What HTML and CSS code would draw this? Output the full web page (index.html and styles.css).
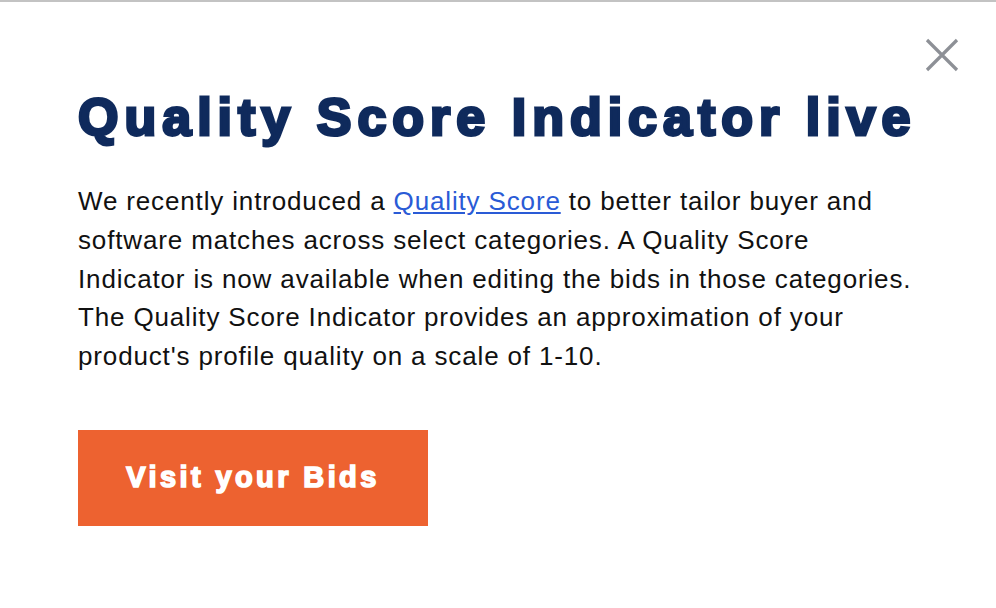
FILE: index.html
```html
<!DOCTYPE html>
<html lang="en">
<head>
<meta charset="utf-8">
<title>Quality Score Indicator live</title>
<link rel="stylesheet" href="styles.css">
</head>
<body>
<div class="modal">
  <button class="close" aria-label="Close">
    <svg width="34" height="34" viewBox="0 0 34 34"><path d="M2 2 L32 32 M32 2 L2 32" stroke="#8d9096" stroke-width="3.2" stroke-linecap="butt" fill="none"/></svg>
  </button>
  <h1 class="title">Quality Score Indicator live</h1>
  <p class="text">We recently introduced a <a href="#">Quality Score</a> to better tailor buyer and software matches across select categories. A Quality Score Indicator is now available when editing the bids in those categories. The Quality Score Indicator provides an approximation of your product's profile quality on a scale of 1-10.</p>
  <a class="cta" href="#">Visit your Bids</a>
</div>
</body>
</html>
```
FILE: styles.css
```css
html, body {
  margin: 0;
  padding: 0;
  background: #ffffff;
}
body {
  width: 996px;
  height: 608px;
  overflow: hidden;
  font-family: "Liberation Sans", Arial, sans-serif;
}
.modal {
  position: relative;
  height: 606px;
  border-top: 2px solid #c3c3c3;
  padding: 0 78px;
  box-sizing: border-box;
  display: flex;
  flex-direction: column;
  align-items: flex-start;
}
.close {
  position: absolute;
  top: 36px;
  right: 37px;
  width: 34px;
  height: 34px;
  padding: 0;
  border: 0;
  background: none;
  cursor: pointer;
}
.close svg { display: block; }
.title {
  margin: 85px 0 0;
  font-size: 52px;
  line-height: 60px;
  font-weight: 700;
  color: #0f2a5c;
  -webkit-text-stroke: 3px #0f2a5c;
  letter-spacing: 6px;
  white-space: nowrap;
}
.text {
  margin: 35px 0 0;
  font-size: 26px;
  line-height: 38.75px;
  letter-spacing: 0.85px;
  color: #111111;
  width: 840px;
}
.text a {
  color: #2a5bd6;
  text-decoration: underline;
}
.cta {
  margin-top: 54px;
  width: 350px;
  height: 96px;
  background: #ed6230;
  color: #ffffff;
  display: flex;
  align-items: center;
  justify-content: center;
  font-size: 29px;
  font-weight: 700;
  -webkit-text-stroke: 1.6px #ffffff;
  letter-spacing: 3.4px;
  text-decoration: none;
}
```
